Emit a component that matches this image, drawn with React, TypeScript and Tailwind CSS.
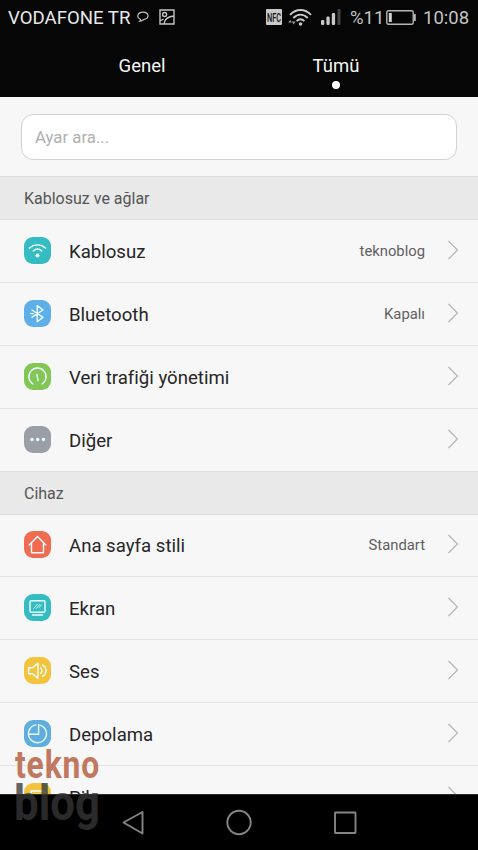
import type { ReactNode } from "react";

interface SettingsItem {
  label: string;
  value?: string;
  color: string;
  icon: ReactNode;
}

const wireless: SettingsItem[] = [
  {
    label: "Kablosuz",
    value: "teknoblog",
    color: "bg-[#35bcc2]",
    icon: (
      <>
        <path d="M5.4 11.2c4.6-4.4 11.6-4.4 16.2 0M9.2 14c2.6-2.3 6-2.3 8.6 0" />
        <circle cx="13.5" cy="18.4" r="2" fill="currentColor" stroke="none" />
      </>
    ),
  },
  {
    label: "Bluetooth",
    value: "Kapalı",
    color: "bg-[#5eaee8]",
    icon: <path d="m8 10 11 7.4-5.8 4.4V5.6l5.8 4.4L8 17.2M6.6 13.6h2.8" />,
  },
  {
    label: "Veri trafiği yönetimi",
    color: "bg-[#83c655]",
    icon: <path d="M9 21a8.6 8.6 0 1 1 9 0M12.9 11.5l1.1 6" />,
  },
  {
    label: "Diğer",
    color: "bg-[#9a9ea7]",
    icon: (
      <g fill="currentColor" stroke="none">
        <circle cx="8" cy="13.5" r="1.7" />
        <circle cx="13.7" cy="13.5" r="1.7" />
        <circle cx="19.4" cy="13.5" r="1.7" />
      </g>
    ),
  },
];

const device: SettingsItem[] = [
  {
    label: "Ana sayfa stili",
    value: "Standart",
    color: "bg-[#ef6c53]",
    icon: <path d="m5.2 14 8.3-8.4 8.3 8.4M7.5 12.2v9.6h12v-9.6" />,
  },
  {
    label: "Ekran",
    color: "bg-[#35bcc0]",
    icon: (
      <>
        <rect x="6" y="6.7" width="15" height="11.6" rx="1.2" />
        <path d="M8.5 21h10" />
        <path d="m9.8 14.4 3.5-4M12.3 14.4l3.5-4M15.2 13.4l2-2.4" strokeWidth="0.8" />
      </>
    ),
  },
  {
    label: "Ses",
    color: "bg-[#f2c43d]",
    icon: (
      <path d="M4.6 10.8h4l5.4-4.6v15.2l-5.4-4.6h-4zM16.6 11c1.8 1.5 1.8 3.9 0 5.4M18.6 8c4.6 3 4.6 8.4 0 11.4" />
    ),
  },
  {
    label: "Depolama",
    color: "bg-[#5faedf]",
    icon: <path d="M11.8 4.9a9 9 0 1 0 4.2.2M4.9 14.2h9.7V4.6" />,
  },
  {
    label: "Pil",
    color: "bg-[#f2c43d]",
    icon: <path d="M7 8h13v12H7zM10 11.5h7v5h-7z" />,
  },
];

function StatusBar() {
  return (
    <div className="flex h-[34px] items-center px-2 text-[18.5px] text-[#c4c4c4]">
      <span className="w-[123px] whitespace-nowrap pt-[3px] text-[18.6px] text-[#e8e8e8]">
        VODAFONE TR
      </span>
      <svg className="ml-[6px] h-3 w-3" viewBox="0 0 12 12" fill="none" stroke="#c4c4c4" strokeWidth="1.2">
        <path d="M3.2 8.2C-.8 6.6.2 1.1 6 1.1s7 6 1.2 7.3c-1.2.4-2.3 1.7-4.4 1.8.8-.7.7-1.3.4-2z" />
      </svg>
      <svg className="ml-[10px] h-4 w-4" viewBox="0 0 16 16" fill="none" stroke="#c4c4c4" strokeWidth="1.4">
        <path d="M1 1h14v14H1zM5 15c.5-5 4-7.6 10-8M1 12l3.6-2" />
        <circle cx="5.6" cy="5.5" r="2" />
      </svg>
      <svg className="ml-[91px] h-4 w-4" viewBox="0 0 16 16">
        <rect width="16" height="16" rx="1" fill="#c9c9c9" />
        <text
          x="1"
          y="12.8"
          textLength="14"
          lengthAdjust="spacingAndGlyphs"
          className="text-[13.5px] font-medium"
          fill="#111"
        >
          NFC
        </text>
      </svg>
      <svg className="ml-[6px] h-[18px] w-6" viewBox="0 0 24 18" fill="none" stroke="#c9c9c9" strokeWidth="1.9">
        <path d="M2 6.8C8 .3 17 .3 23 6.8M5.3 10c4.4-4.5 10-4.5 14.4 0M8.6 13.1c2.3-2.4 5.5-2.4 7.8 0" />
        <circle cx="12.5" cy="16" r="1.8" fill="#c9c9c9" stroke="none" />
        <path d="m.3 14.4 1.9-2.4 1.9 2.4zM3.8 13.4l1.9 3 1.9-3z" fill="#999" stroke="none" />
      </svg>
      <svg className="ml-[9px] h-4 w-5" viewBox="0 0 20 16" fill="#c9c9c9">
        <rect y="11" width="3.3" height="5" rx="1.2" />
        <rect x="5.4" y="7.5" width="3.3" height="8.5" rx="1.2" />
        <rect x="10.8" y="4" width="3.3" height="12" rx="1.2" />
        <rect x="16.5" width="3" height="16" rx="1" fill="#444" />
      </svg>
      <span className="ml-[9px] w-8 whitespace-nowrap pt-[3px]">%11</span>
      <svg className="ml-[4px] h-[15px] w-[30px]" viewBox="0 0 30 15" fill="none" stroke="#b5b5b5" strokeWidth="1.4">
        <rect x=".8" y=".8" width="26.4" height="13.4" rx="1.5" />
        <path d="M28.9 4v7" strokeWidth="1.8" />
        <path d="M4.3 3v9" stroke="#d0d0d0" strokeWidth="3" />
      </svg>
      <span className="ml-[7px] whitespace-nowrap pt-[3px]">10:08</span>
    </div>
  );
}

function Tabs() {
  return (
    <div className="flex h-[63px] px-[45px] pt-5 text-[18.5px] leading-6 text-[#f5f5f5]">
      <div className="w-[194px] text-center">Genel</div>
      <div className="flex w-[194px] flex-col items-center">
        <span>Tümü</span>
        <span className="mt-[3px] size-[8px] rounded-full bg-white" />
      </div>
    </div>
  );
}

function SectionTitle({ title }: { title: string }) {
  return (
    <h2 className="flex h-11 shrink-0 items-center border-y border-[#dedede] bg-[#e9e9e9] px-6 pt-[2px] text-[16px] text-[#555]">
      {title}
    </h2>
  );
}

function SettingsRow({ item }: { item: SettingsItem }) {
  return (
    <li className="flex h-[63px] shrink-0 items-center border-b border-[#e2e2e2] pl-6 pr-[19px] last:h-[62px] last:border-b-0">
      <span className={`mb-[2px] size-[27px] rounded-[9px] text-[#e9ffff] ${item.color}`}>
        <svg
          className="size-full"
          viewBox="0 0 27 27"
          fill="none"
          stroke="currentColor"
          strokeWidth="1.4"
          strokeLinejoin="round"
          strokeLinecap="round"
        >
          {item.icon}
        </svg>
      </span>
      <span className="ml-[18px] flex-1 pt-[3px] text-[18.6px] text-[#262626]">{item.label}</span>
      <span className="pt-px text-[14.8px] text-[#606060]">{item.value}</span>
      <svg className="mb-[2px] ml-[22px] h-5 w-3" viewBox="0 0 12 20" fill="none" stroke="#b5b5b5" strokeWidth="1.2">
        <path d="m1.5 1 9 9-9 9" />
      </svg>
    </li>
  );
}

function NavigationBar() {
  return (
    <nav className="h-14 shrink-0 border-t border-[#2c2c2c] bg-black">
      <svg className="h-full w-full" viewBox="0 0 478 55" fill="none" stroke="#858585" strokeWidth="1.9" strokeLinejoin="round">
        <path d="M142.5 17v21.5l-19-11z" />
        <circle cx="239" cy="27.5" r="11.7" />
        <rect x="335" y="17.5" width="20.5" height="20.5" rx=".5" />
      </svg>
    </nav>
  );
}

function Watermark() {
  return (
    <svg
      className="pointer-events-none absolute bottom-[10px] left-[10px] h-[95px] w-[100px] font-bold"
      viewBox="0 0 100 95"
    >
      <text
        x="5"
        y="33"
        textLength="85"
        lengthAdjust="spacingAndGlyphs"
        className="text-[38px] tracking-[1px]"
        fill="#bd6f55"
        opacity=".93"
      >
        tekno
      </text>
      <text
        x="4"
        y="75"
        textLength="86"
        lengthAdjust="spacingAndGlyphs"
        className="text-[50px]"
        fill="#373737"
        opacity=".77"
      >
        blog
      </text>
    </svg>
  );
}

export default function App() {
  return (
    <div className="relative flex h-[850px] w-[478px] flex-col overflow-hidden bg-[#f7f7f7] font-[Roboto,sans-serif] [font-variant-ligatures:none]">
      <header className="h-[97px] shrink-0 bg-[#060606]">
        <StatusBar />
        <Tabs />
      </header>
      <main className="flex min-h-0 flex-1 flex-col overflow-hidden">
        <div className="h-[79px] shrink-0 px-[21px] pt-[17px]">
          <input
            className="h-[46px] w-full rounded-[12px] border border-[#d2d2d2] bg-white px-[13px] text-[16.8px] outline-none placeholder:text-[#b0b0b0]"
            placeholder="Ayar ara..."
          />
        </div>
        <SectionTitle title="Kablosuz ve ağlar" />
        <ul className="shrink-0">
          {wireless.map((item) => (
            <SettingsRow key={item.label} item={item} />
          ))}
        </ul>
        <SectionTitle title="Cihaz" />
        <ul className="-mt-px shrink-0">
          {device.map((item) => (
            <SettingsRow key={item.label} item={item} />
          ))}
        </ul>
      </main>
      <NavigationBar />
      <Watermark />
    </div>
  );
}
